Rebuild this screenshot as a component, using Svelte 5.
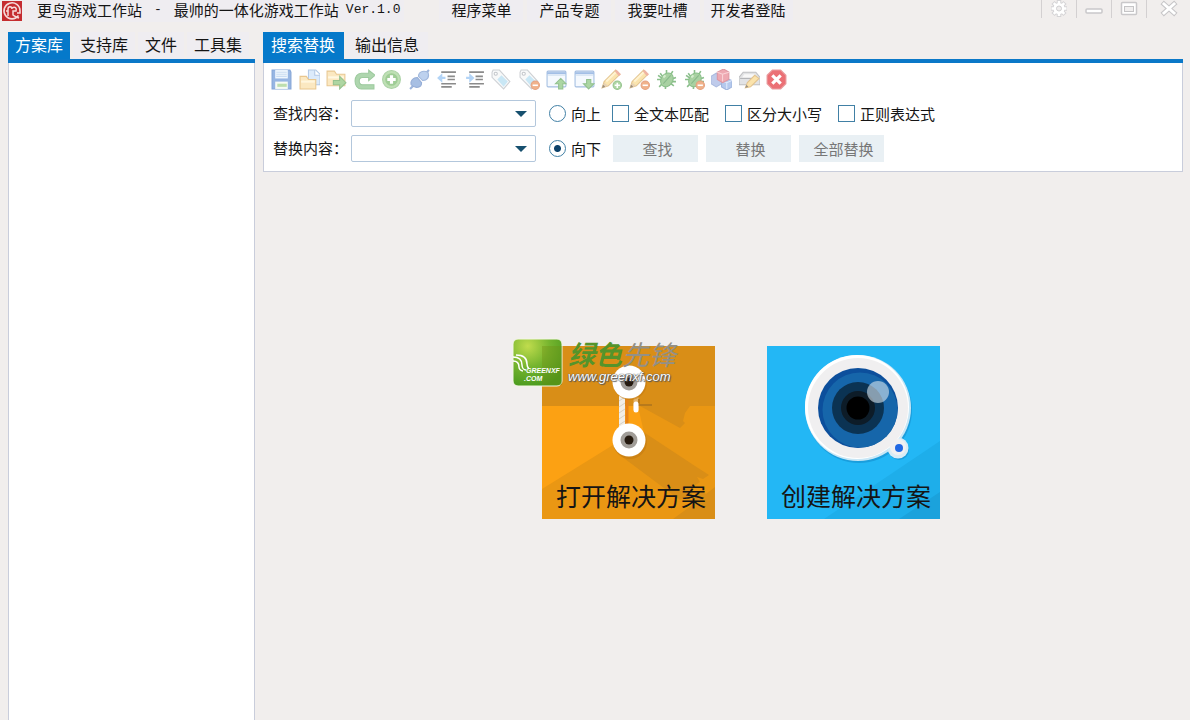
<script>
  let direction = $state('down');
  let findText = $state('');
  let replaceText = $state('');
  let leftTab = $state('方案库');
  let rightTab = $state('搜索替换');

  const menus = ['程序菜单', '产品专题', '我要吐槽', '开发者登陆'];
  const leftTabs = ['方案库', '支持库', '文件', '工具集'];
  const rightTabs = ['搜索替换', '输出信息'];
  const options = ['全文本匹配', '区分大小写', '正则表达式'];
  const actions = ['查找', '替换', '全部替换'];

  // shared pieces of the toolbar icons
  const tag = '<path d="M1 3l1-2 6 0 10 11-6 7L1 8z" fill="#f7f8f9" stroke="#c5c9cd"/><circle cx="4.500" cy="4.500" r="1.500" fill="#fff" stroke="#b9bdc2"/><path d="M6 10l4-4 6 6-4 5z" fill="#c0e3f4"/>';
  const minus = '<circle cx="15.500" cy="15.500" r="4" fill="#eea577" stroke="#e0916a"/><path d="M13 15.500h5" stroke="#fff" stroke-width="1.500"/>';
  const plus = '<circle cx="15.500" cy="15.500" r="4" fill="#a1cf96" stroke="#83b97a"/><path d="M13 15.500h5M15.500 13v5" stroke="#fff" stroke-width="1.500"/>';
  const win = '<rect x="1" y="2" width="18" height="15" rx="1" fill="#f4f9fe" stroke="#94b3dd"/><path d="M1 3h18v2H1z" fill="#94b5e2"/><path d="M2 6h16" stroke="#d1e0f1"/>';
  const pencil = '<path d="M1 18l2-6L14 1l4 4L7 16z" fill="#fae0a0" stroke="#deb97b"/><path d="M5 12l9-9" stroke="#fff1c9" stroke-width="2"/><path d="M13 2l2-1 4 4-2 2z" fill="#eda894"/><path d="M1 18l2-5 4 3z" fill="#e3cba6"/><path d="M1 18l1-3 2 2z" fill="#887866"/>';
  const lines = '<path d="M5 3h14M11 7h7M11 10h7M5 14h14M5 17h10" stroke="#777" stroke-width="1.500"/>';
  const bug = '<path d="M4 4l3 4M10 1v5M16 2l-3 5M1 10h5M19 8l-5 2M3 17l4-4M9 19v-5M17 16l-4-3M2 6l4 3M19 12l-5 0" stroke="#76b477" stroke-width="1.500"/><ellipse cx="10.500" cy="10" rx="5.500" ry="7" transform="rotate(35 10 10)" fill="#9aca92" stroke="#77b576"/><path d="M7 14l7-8" stroke="#74ad77"/><path d="M7 8l2-2" stroke="#cde9c5" stroke-width="2"/>';

  const tools = [
    { label: '保存', art: '<path d="M1 1h17l1 2v16H1z" fill="#86aadf" stroke="#7097d1"/><path d="M4 1h12v8H4z" fill="#eef6fe"/><path d="M5 3h10M5 5h10M5 7h10" stroke="#c1d8f0"/><path d="M4 12h12v7H4z" fill="#f5fbf3"/><path d="M6 14h9v3H6z" fill="#b2d9a1"/>' },
    { label: '打开', art: '<path d="M9 1h7l4 4v10H9z" fill="#d6e8fb" stroke="#a5c0e2"/><path d="M15 1v5h5" fill="#fff" stroke="#a5c0e2"/><path d="M1 7h6l2 3h7v9H1z" fill="#fbe5b7" stroke="#e5bd7b"/><path d="M2 12h13" stroke="#fff5d9" stroke-width="2"/>' },
    { label: '导出', art: '<path d="M1 2h7l2 3h8v11H1z" fill="#fbe5b7" stroke="#e5bf80"/><path d="M2 8h15" stroke="#fff7df" stroke-width="2"/><path d="M7 11h6V7l6 6-6 6v-4H7z" fill="#a1cf92" stroke="#83b87c"/>' },
    { label: '撤销', art: '<path d="M14 1l6 5-6 5V8H8c-4 0-4 7 0 7h11v4H7C-1 19-1 4 7 4h7z" fill="#a1cfa0" stroke="#8cc18e"/>' },
    { label: '添加', art: '<circle cx="10" cy="10" r="8.500" fill="#b4dba8" stroke="#9cca95"/><circle cx="10" cy="10" r="6" fill="#8fc584"/><path d="M10 6v8M6 10h8" stroke="#fff" stroke-width="3"/>' },
    { label: '连接', art: '<path d="M1 19l4-4M16 4l3-3" stroke="#8da9d6" stroke-width="2"/><path d="M2 15c-1-4 2-7 6-7l4 5c0 5-6 6-10 2z" fill="#98b4df" stroke="#839fcf"/><path d="M9 7c0-4 4-6 9-4 2 5-1 8-5 8z" fill="#b2caec" stroke="#91acd7"/>' },
    { label: '减少缩进', art: lines + '<path d="M9 9.500H6V13L1 8.500 6 4v3.500h3z" fill="#a6cdf5"/>' },
    { label: '增加缩进', art: lines + '<path d="M2 7.500h3V4l5 4.500L5 13V9.500H2z" fill="#a6cdf5"/>' },
    { label: '标签', art: tag },
    { label: '删除标签', art: tag + minus },
    { label: '上移窗口', art: win + '<path d="M14 9l5 5h-3v5h-4v-5H9z" fill="#9dcf94" stroke="#80b77c"/>' },
    { label: '下移窗口', art: win + '<path d="M14 19l5-5h-3v-4h-4v4H9z" fill="#9dcf94" stroke="#80b77c"/>' },
    { label: '新增编辑', art: pencil + plus },
    { label: '取消编辑', art: pencil + minus },
    { label: '调试', art: bug },
    { label: '停止调试', art: bug + minus },
    { label: '模块', art: '<path d="M0 7l5-3 5 3v7l-5 3-5-3z" fill="#b4c3e8" stroke="#9dafda"/><path d="M10 11l5-2 5 2v6l-5 3-5-3z" fill="#a9c0ea" stroke="#8fa8d8"/><path d="M10 11l5 2 5-2M15 13v6" stroke="#dce7fa" fill="none"/><path d="M6 3l6-3 5 3v7l-6 3-5-3z" fill="#ec9ba5" stroke="#d98491"/><path d="M6 3l5 2 6-2M11 5v7" stroke="#f8ccd1" fill="none"/>' },
    { label: '打印设置', art: '<path d="M4 3h12l4 5v7H0V8z" fill="#dedfe1" stroke="#b4b5b8"/><path d="M5 5h10l2 3H3z" fill="#f7f7f7"/><path d="M1 9h18" stroke="#a9aaad"/><path d="M6 18l2-5 7-7 4 3-8 8z" fill="#fbdf9e" stroke="#deb97b"/><path d="M6 18l1-3 2 2z" fill="#8d806f"/>' },
    { label: '关闭', art: '<path d="M6 1h8l5 5v8l-5 5H6l-5-5V6z" fill="#e8585e" stroke="#e58c8f"/><path d="M6 6l8 8M14 6l-8 8" stroke="#fff" stroke-width="3"/>' }
  ];
</script>

<div class="app">
  <header class="titlebar">
    <svg class="logo" viewBox="0 0 20 20" aria-hidden="true">
      <rect width="20" height="20" fill="#c52d2f" />
      <path d="M16.500 14.500A8 8 0 1 1 18 10v2h-3" fill="none" stroke="#f6dcda" stroke-width="1.600" />
      <path d="M6 15V8c0-3 4-3 4 0M6 10H4M10 7c3-2 5 0 4 3h-3v4c2 2 4 2 6 3" fill="none" stroke="#f6dcda" stroke-width="1.500" />
    </svg>
    <h1>
      <span>更鸟游戏工作站</span>
      <span class="latin">-</span>
      <span>最帅的一体化游戏工作站</span>
      <span class="latin version">Ver.1.0</span>
    </h1>
    <nav>
      {#each menus as menu}
        <button class="menu">{menu}</button>
      {/each}
    </nav>
    <div class="window-buttons">
      <button aria-label="设置">
        <svg width="20" height="18" viewBox="0 0 20 18">
          <g stroke="#d5d4d6" stroke-width="4.500"><path d="M10 0v17M2 8.500h16M4 2.500l12 12M16 2.500l-12 12" /></g>
          <circle cx="10" cy="8.500" r="6.500" fill="#d5d4d6" />
          <g stroke="#fff" stroke-width="2.500"><path d="M10 1v15M2.500 8.500h15M4.700 3.200l10.600 10.600M15.300 3.200L4.700 13.800" /></g>
          <circle cx="10" cy="8.500" r="4" fill="#ededed" stroke="#fff" stroke-width="3" />
          <circle cx="10" cy="8.500" r="2.500" fill="#efeded" stroke="#d0cfd1" />
        </svg>
      </button>
      <button aria-label="最小化">
        <svg width="20" height="18" viewBox="0 0 20 18"><rect x="2" y="9" width="16" height="4" rx="1" fill="#fff" stroke="#c9c8ca" stroke-width="1.500" /></svg>
      </button>
      <button aria-label="最大化">
        <svg width="20" height="18" viewBox="0 0 20 18">
          <rect x="2.500" y="2.500" width="15" height="12" rx="1" fill="#fff" stroke="#c9c8ca" stroke-width="1.500" />
          <rect x="5.500" y="6.500" width="9" height="5" fill="#f0eeee" stroke="#c5c4c6" />
        </svg>
      </button>
      <button aria-label="关闭">
        <svg width="20" height="18" viewBox="0 0 20 18">
          <path d="M5 4l10 9M15 4L5 13" stroke="#c6c5c7" stroke-width="5" stroke-linecap="square" />
          <path d="M5 4l10 9M15 4L5 13" stroke="#fff" stroke-width="3" stroke-linecap="square" />
        </svg>
      </button>
    </div>
  </header>

  <main>
    <aside>
      <div class="tabs">
        {#each leftTabs as tab}
          <button class="tab" class:active={leftTab === tab} onclick={() => (leftTab = tab)}>{tab}</button>
        {/each}
      </div>
      <div class="panel tree"></div>
    </aside>

    <section>
      <div class="tabs wide">
        {#each rightTabs as tab}
          <button class="tab" class:active={rightTab === tab} onclick={() => (rightTab = tab)}>{tab}</button>
        {/each}
      </div>
      <div class="panel search">
        <div class="toolbar">
          {#each tools as tool}
            <button aria-label={tool.label}>
              <svg width="21" height="21" viewBox="0 0 20 20" fill="none">{@html tool.art}</svg>
            </button>
          {/each}
        </div>

        <div class="row">
          <label class="field" for="find">查找内容：</label>
          <div class="combo">
            <select id="find" bind:value={findText}><option value=""></option></select>
          </div>
          <label class="check"><input type="radio" name="direction" value="up" bind:group={direction} />向上</label>
          <div class="options">
            {#each options as option}
              <label class="check"><input type="checkbox" />{option}</label>
            {/each}
          </div>
        </div>

        <div class="row">
          <label class="field" for="replace">替换内容：</label>
          <div class="combo">
            <select id="replace" bind:value={replaceText}><option value=""></option></select>
          </div>
          <label class="check"><input type="radio" name="direction" value="down" bind:group={direction} />向下</label>
          <div class="actions">
            {#each actions as action}
              <button class="action" disabled>{action}</button>
            {/each}
          </div>
        </div>
      </div>

      <div class="start">
        <div class="tile-box">
          <button class="tile">
            <svg viewBox="0 0 173 173" aria-hidden="true">
              <rect width="173" height="173" fill="#ea9713" />
              <path d="M0 60h96l6 27-31 12L0 143z" fill="#fca113" />
              <path d="M0 0h173v60H0z" fill="#d98e17" />
              <path d="M98 60h50l-5 7-2 8 2 2-5 5z" fill="#d98e17" />
              <path d="M79 110l24-23 50 33 14 9-6 4-6-2 3 5-6 4-2 8-12 6z" fill="#d98e17" />
              <path d="M131 173l22-16v-9l6-4 5 4 9-7v32z" fill="#d98e17" />
              <path d="M94 51v13" stroke="#e5b56a" stroke-width="5" />
              <path d="M97 53v6h13" fill="none" stroke="#b77a1c" stroke-width="2" />
              <path d="M85 53v27" stroke="#e6831a" stroke-width="3" />
              <path d="M80 50v32" stroke="#f2eee7" stroke-width="6" />
              <path d="M77 55l6-4M77 61l6-4M77 67l6-4M77 73l6-4M77 79l6-4" stroke="#d8d1c4" />
              <path d="M94 58v6" stroke="#fff" stroke-width="5" stroke-linecap="round" />
              <circle cx="88" cy="37" r="17" fill="#c57b12" opacity=".6" />
              <circle cx="88" cy="96" r="17" fill="#c57b12" opacity=".6" />
              <circle cx="87" cy="36" r="16.500" fill="#fff" />
              <circle cx="87" cy="36" r="8.500" fill="#a19d98" />
              <circle cx="87" cy="36" r="4.500" fill="#251a10" />
              <circle cx="87" cy="94" r="16.500" fill="#fff" />
              <circle cx="87" cy="94" r="8.500" fill="#a19d98" />
              <circle cx="87" cy="94" r="4.500" fill="#251a10" />
            </svg>
            <span>打开解决方案</span>
          </button>
          <div class="watermark">
            <svg width="51" height="49" viewBox="0 0 51 49" aria-hidden="true">
              <defs>
                <radialGradient id="leaf" cx="30%" cy="15%" r="90%">
                  <stop offset="0" stop-color="#c0dc4d" />
                  <stop offset=".5" stop-color="#75b42e" />
                  <stop offset="1" stop-color="#48991e" />
                </radialGradient>
              </defs>
              <rect x="1" y="1" width="49" height="47" rx="5" fill="url(#leaf)" stroke="#f2f7e4" />
              <path d="M30 8h20v39H30z" fill="#6f8d11" opacity=".35" />
              <path d="M1 19c6 0 9 3 9 8 0 3 2 5 4 5M1 23c4 0 6 2 6 6 0 2 2 4 4 4M4 17c8 0 11 4 11 9 0 2 1 4 2 5" fill="none" stroke="#fff" stroke-width="1.500" />
              <text x="14" y="35" class="brand">GREENXF</text>
              <text x="12" y="43" class="brand">.COM</text>
            </svg>
            <div class="site">
              <strong><b>绿色</b>先锋</strong>
              <em>www.greenxf.com</em>
            </div>
          </div>
        </div>

        <button class="tile">
          <svg viewBox="0 0 173 173" aria-hidden="true">
            <rect width="173" height="173" fill="#23b7f5" />
            <path d="M57 173L173 95v78z" fill="#1eaeea" />
            <path d="M132 173l41-27v27z" fill="#1ba2dc" />
            <circle cx="92" cy="64" r="53" fill="#1a9edd" />
            <circle cx="132" cy="104" r="10" fill="#1a9edd" />
            <circle cx="91" cy="62" r="53" fill="#c9e7f6" />
            <circle cx="131" cy="102" r="10.500" fill="#d9ebf5" />
            <circle cx="90" cy="61" r="52" fill="#fff" />
            <circle cx="91" cy="62" r="50" fill="#f0eff0" />
            <circle cx="131" cy="101" r="8" fill="#f1f0f1" />
            <circle cx="91" cy="62" r="40" fill="#0c4f9c" />
            <circle cx="93" cy="64" r="37.500" fill="#1666aa" />
            <circle cx="91" cy="62" r="26" fill="#0b3353" />
            <circle cx="91" cy="62" r="17" fill="#0d1c28" />
            <circle cx="91" cy="62" r="11.500" fill="#000" />
            <circle cx="111" cy="46" r="11" fill="#d9e4ec" opacity=".6" />
            <circle cx="132" cy="102" r="4" fill="#2168e3" />
          </svg>
          <span>创建解决方案</span>
        </button>
      </div>
    </section>
  </main>
</div>

<style>
  :global(body) { margin: 0; background: #f1eeed; }
  .app { display: flex; flex-direction: column; min-height: 100vh; font-family: "Noto Sans CJK SC", sans-serif; font-size: 15px; color: #151515; }
  button { border: 0; padding: 0; background: none; font: inherit; color: inherit; cursor: pointer; }
  svg { display: block; }

  .titlebar { display: flex; align-items: flex-start; height: 32px; line-height: 20px; }
  .logo { width: 20px; height: 20px; margin: 1px 8px 0 2px; }
  h1 { display: flex; gap: 12px; margin: 0; padding: 0 4px 2px 7px; font-size: 15px; font-weight: 400; white-space: nowrap; background: #efedf1; }
  .latin { font-family: "Liberation Mono", monospace; font-size: 13px; }
  .version { margin-left: -5px; }
  nav { display: flex; gap: 4px; margin-left: 35px; }
  .menu { padding: 0 12px 2px; line-height: 20px; background: #efedf1; white-space: nowrap; }
  .menu:last-child { padding: 0 7px 2px; }
  .window-buttons { display: flex; margin-left: auto; }
  .window-buttons button { display: flex; justify-content: center; width: 35px; height: 18px; border-left: 1px solid #d3d0d1; }
  .window-buttons button:last-child { width: 44px; }

  main { display: flex; flex: 1; gap: 8px; padding: 0 7px 0 8px; }
  aside { display: flex; flex-direction: column; width: 247px; flex-shrink: 0; }
  section { flex: 1; display: flex; flex-direction: column; }
  .tabs { display: flex; gap: 3px; height: 27px; border-bottom: 4px solid #0b78c8; }
  .tab { padding: 0 7px 2px; font-size: 16px; line-height: 25px; background: #efedf1; white-space: nowrap; }
  .wide .tab { padding: 0 9px 2px 8px; }
  .tab.active { background: #0579ca; color: #fff; }
  .panel { background: #fff; border: 1px solid #c9cddb; border-top: 0; }
  .tree { flex: 1; border-bottom: 0; }

  .search { display: flex; flex-direction: column; gap: 8px; padding: 6px 9px 9px; }
  .toolbar { display: flex; justify-content: space-between; width: 516px; height: 21px; margin: 0 0 2px -2px; }
  .toolbar svg { opacity: .85; }
  .row { display: flex; align-items: center; height: 27px; white-space: nowrap; }
  .field { width: 78px; padding-bottom: 2px; }
  .combo { position: relative; width: 185px; height: 27px; margin-right: 13px; }
  .combo select { width: 100%; height: 100%; appearance: none; background: #fff; border: 1px solid #b3c7dc; border-radius: 2px; font: inherit; }
  .combo::after { content: ""; position: absolute; right: 9px; top: 11px; border: 6px solid transparent; border-top-color: #17506f; border-bottom: 0; pointer-events: none; }
  .check { display: flex; align-items: center; gap: 5px; }
  .check input { appearance: none; width: 17px; height: 17px; margin: 0; background: #fff; border: 1px solid #4180a5; }
  .check input[type="radio"] { border-radius: 50%; }
  .check input[type="radio"]:checked { background: radial-gradient(circle, #0d426a 3px, #fff 4px); }
  .check input[type="checkbox"]:checked { background: #4180a5; }
  .options { display: flex; gap: 16px; margin-left: 11px; }
  .actions { display: flex; gap: 8px; margin-left: 12px; }
  .action { width: 85px; height: 27px; padding-left: 4px; background: #e9f0f4; color: #777; }

  .start { display: flex; justify-content: center; gap: 52px; padding: 174px 0 40px 36px; }
  .tile-box { position: relative; }
  .tile { display: grid; width: 173px; height: 173px; }
  .tile > * { grid-area: 1 / 1; }
  .tile span { align-self: end; padding: 0 0 6px 5px; font-size: 25px; line-height: 36px; }
  .watermark { position: absolute; left: -30px; top: -8px; display: flex; gap: 5px; pointer-events: none; }
  .brand { font: italic bold 7px "Liberation Sans", sans-serif; fill: #fff; }
  .site { display: flex; flex-direction: column; white-space: nowrap; }
  .site strong { font-size: 27px; font-weight: 400; font-style: italic; line-height: 32px; color: #929087; }
  .site b { font-weight: 700; color: #54942b; }
  .site em { font: italic 13px/14px "Liberation Sans", sans-serif; color: #fff; text-shadow: 0 0 1px #555, 0 0 1px #555, 1px 1px 1px #555; }
</style>
